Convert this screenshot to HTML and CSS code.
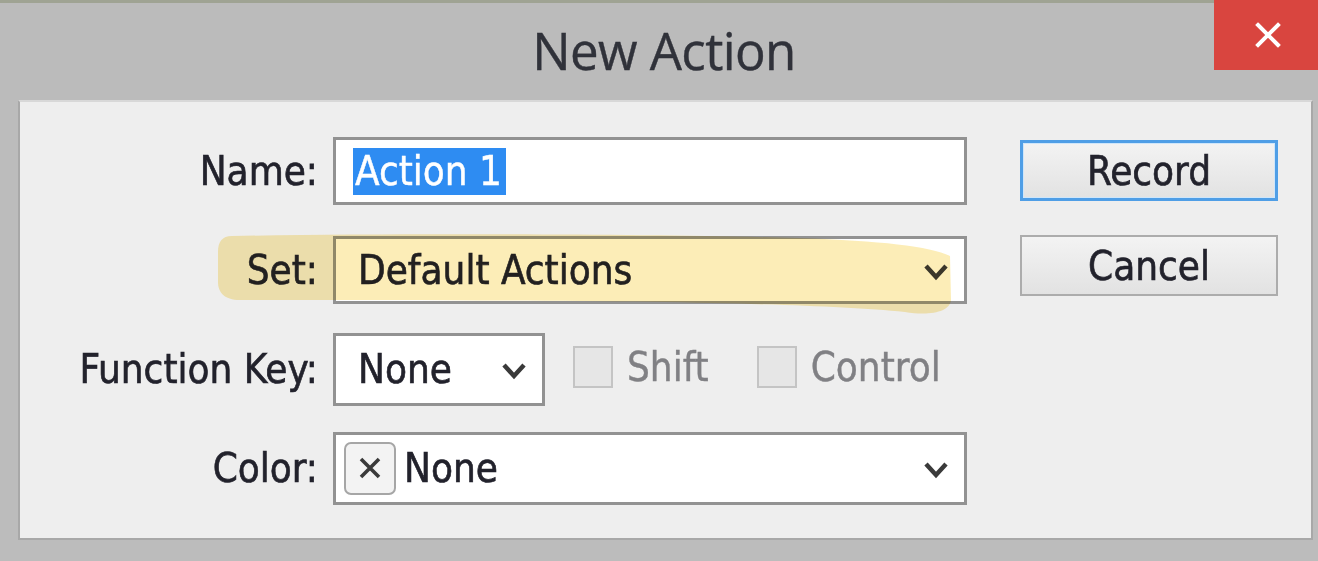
FILE: index.html
```html
<!DOCTYPE html>
<html>
<head>
<meta charset="utf-8">
<title>New Action</title>
<link rel="stylesheet" href="styles.css">
</head>
<body>
<div class="window">
  <div class="titlebar">
    <div class="title">New Action</div>
    <div class="close">
      <svg width="30" height="30" viewBox="0 0 30 30"><path d="M5 5 L25 25 M25 5 L5 25" stroke="#ffffff" stroke-width="4" stroke-linecap="square"/></svg>
    </div>
  </div>
  <div class="panel">
    <div class="form">
      <div class="row">
        <div class="label">Name:</div>
        <div class="field wide"><span class="sel">Action 1</span></div>
      </div>
      <div class="row">
        <div class="label">Set:</div>
        <div class="field wide select"><span class="val">Default Actions</span>
          <svg class="chev" width="28" height="20" viewBox="0 0 28 20"><path d="M4 4 L14 15 L24 4" fill="none" stroke="#3a3a3a" stroke-width="4.5"/></svg>
        </div>
      </div>
      <div class="row">
        <div class="label">Function Key:</div>
        <div class="field short select"><span class="val">None</span>
          <svg class="chev" width="28" height="20" viewBox="0 0 28 20"><path d="M4 4 L14 15 L24 4" fill="none" stroke="#3a3a3a" stroke-width="4.5"/></svg>
        </div>
        <div class="check"><span class="box"></span><span class="ctext">Shift</span></div>
        <div class="check"><span class="box"></span><span class="ctext">Control</span></div>
      </div>
      <div class="row">
        <div class="label">Color:</div>
        <div class="field wide select color">
          <span class="xbox"><svg width="26" height="26" viewBox="0 0 26 26"><path d="M4 4 L22 22 M22 4 L4 22" stroke="#3a3a3a" stroke-width="3.6"/></svg></span><span class="val">None</span>
          <svg class="chev" width="28" height="20" viewBox="0 0 28 20"><path d="M4 4 L14 15 L24 4" fill="none" stroke="#3a3a3a" stroke-width="4.5"/></svg>
        </div>
      </div>
    </div>
    <div class="buttons">
      <div class="btn primary">Record</div>
      <div class="btn">Cancel</div>
    </div>
  </div>
  <svg class="marker" width="1318" height="561" viewBox="0 0 1318 561">
    <path d="M232 236 C 400 233, 650 234, 800 238 C 880 241, 930 246, 950 256 L 951 300 C 950 312, 930 316, 905 312 C 800 302, 600 300, 240 300 C 224 300, 218 292, 218 282 L 218 252 C 218 242, 222 236, 232 236 Z" fill="rgba(248,214,96,0.45)"/>
  </svg>
</div>
</body>
</html>
```
FILE: styles.css
```css
html, body {
  margin: 0;
  padding: 0;
}
body {
  width: 1318px;
  height: 561px;
  overflow: hidden;
  background: #bcbcbc;
  font-family: "DejaVu Sans Condensed", "DejaVu Sans", sans-serif;
  font-stretch: condensed;
  color: #22222c;
}
.window {
  position: relative;
  width: 1318px;
  height: 561px;
  border-top: 3px solid #9fa393;
  box-sizing: border-box;
  display: flex;
  flex-direction: column;
}
.titlebar {
  position: relative;
  height: 97px;
  display: flex;
  justify-content: center;
  align-items: flex-start;
  background: #bbbbbb;
}
.title {
  font-family: "Open Sans", "Noto Sans", sans-serif;
  font-stretch: normal;
  font-size: 51px;
  letter-spacing: -0.6px;
  color: #30323a;
  margin-top: 12px;
  margin-left: 10px;
  -webkit-text-stroke: 0.4px #30323a;
}
.close {
  position: absolute;
  right: 0;
  top: -3px;
  width: 104px;
  height: 70px;
  background: #d9453f;
  display: flex;
  align-items: center;
  justify-content: center;
}
.close svg {
  margin-left: 4px;
}
.panel {
  margin: 0 5px 0 18px;
  height: 440px;
  box-sizing: border-box;
  background: #eeeeee;
  border: 2px solid #a8a8a8;
  border-top: 2px solid #d8d8d8;
  display: flex;
}
.form {
  display: flex;
  flex-direction: column;
  gap: 29px;
  padding-top: 34px;
}
.row {
  display: flex;
  align-items: center;
  height: 70px;
}
.label {
  width: 313px;
  text-align: right;
  font-size: 40px;
  padding-right: 15px;
  box-sizing: border-box;
  -webkit-text-stroke: 0.6px #22222c;
}
.field {
  height: 68px;
  box-sizing: border-box;
  border: 3px solid #929292;
  background: #ffffff;
  display: flex;
  align-items: center;
  font-size: 40px;
  position: relative;
  -webkit-text-stroke: 0.6px #22222c;
}
.wide {
  width: 634px;
}
.short {
  width: 212px;
  height: 73px;
}
.sel {
  background: #2e8cf2;
  color: #ffffff;
  -webkit-text-stroke: 0.4px #ffffff;
  margin-left: 17px;
  padding: 0 4px 0 2px;
  line-height: 47px;
}
.val {
  margin-left: 22px;
}
.select .chev {
  position: absolute;
  right: 14px;
  top: 50%;
  margin-top: -8px;
}
.color .val {
  margin-left: 8px;
}
.color {
  height: 73px;
}
.xbox {
  margin-left: 8px;
  width: 52px;
  height: 53px;
  box-sizing: border-box;
  border: 2px solid #a6a6a6;
  border-radius: 7px;
  background: #f3f3f3;
  display: flex;
  align-items: center;
  justify-content: center;
}
.check {
  display: flex;
  align-items: center;
  margin-left: 28px;
  margin-top: -4px;
}
.check + .check {
  margin-left: 48px;
}
.box {
  width: 40px;
  height: 42px;
  box-sizing: border-box;
  border: 2px solid #c4c4c4;
  background: #e6e6e6;
}
.ctext {
  font-size: 40px;
  color: #808084;
  margin-left: 14px;
  -webkit-text-stroke: 0.4px #808084;
}
.buttons {
  display: flex;
  flex-direction: column;
  gap: 34px;
  margin-left: 53px;
  padding-top: 38px;
}
.btn {
  width: 258px;
  height: 61px;
  box-sizing: border-box;
  border: 2px solid #acacac;
  background: linear-gradient(#f3f3f3, #e2e2e2);
  display: flex;
  align-items: center;
  justify-content: center;
  font-size: 40px;
  color: #22222c;
  -webkit-text-stroke: 0.6px #22222c;
}
.primary {
  border: 3px solid #4f9ee6;
  box-shadow: inset 0 0 0 1px #cfe6fa;
}
.marker {
  position: absolute;
  left: 0;
  top: -3px;
  pointer-events: none;
  mix-blend-mode: multiply;
}
```
